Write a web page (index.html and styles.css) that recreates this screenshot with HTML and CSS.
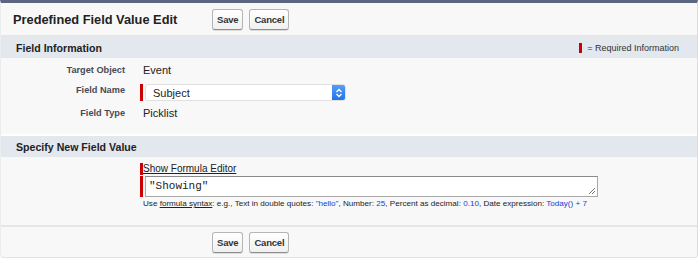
FILE: index.html
```html
<!DOCTYPE html>
<html>
	<head>
		<meta charset="utf-8">
		<title>Predefined Field Value Edit</title>
		<link rel="stylesheet" href="styles.css">
	</head>
	<body>
		<div class="edit-box">
			<div class="page-bar">
				<h2 class="page-title">Predefined Field Value Edit</h2>
				<div class="btn-row">
					<button class="btn">Save</button>
					<button class="btn">Cancel</button>
				</div>
			</div>

			<div class="section-head">
				<h3>Field Information</h3>
				<div class="req-legend"><span class="req-bar"></span>= Required Information</div>
			</div>
			<div class="section-body info-rows">
				<div class="row">
					<div class="label">Target Object</div>
					<div class="value">Event</div>
				</div>
				<div class="row select-row">
					<div class="label">Field Name</div>
					<div class="value required">
						<div class="fake-select">
							<span>Subject</span>
							<span class="select-arrow">
								<svg width="8" height="12" viewBox="0 0 8 12"><path d="M1.5 5 L4 2.5 L6.5 5 M1.5 7 L4 9.5 L6.5 7" fill="none" stroke="#fff" stroke-width="1.3"/></svg>
							</span>
						</div>
					</div>
				</div>
				<div class="row">
					<div class="label">Field Type</div>
					<div class="value">Picklist</div>
				</div>
			</div>

			<div class="section-head">
				<h3>Specify New Field Value</h3>
			</div>
			<div class="section-body formula">
				<div class="formula-col">
					<div class="required"><a href="#" class="formula-link">Show Formula Editor</a></div>
					<div class="required">
						<div class="fake-textarea">"Showing"<span class="grip"></span></div>
					</div>
					<div class="help">Use <u>formula syntax</u>: e.g., Text in double quotes: <span class="blue">"hello"</span>, Number: <span class="blue">25</span>, Percent as decimal: <span class="blue">0.10</span>, Date expression: <span class="blue">Today() + 7</span></div>
				</div>
			</div>

			<div class="page-bar bottom">
				<div class="btn-row">
					<button class="btn">Save</button>
					<button class="btn">Cancel</button>
				</div>
			</div>
		</div>
	</body>
</html>
```

FILE: styles.css
```css
* {
	margin: 0;
	padding: 0;
	box-sizing: border-box;
}
body {
	background: #fff;
	font-family: "Liberation Sans", Arial, sans-serif;
	color: #222;
}
.edit-box {
	width: 698px;
	background: #f8f8f8;
	border-top: 3px solid #5a6680;
	border-right: 1px solid #dcdcdc;
	border-bottom: 1px solid #e2e2e2;
	border-left: 1px solid #ececec;
	border-radius: 0 0 4px 4px;
}
.page-bar {
	display: flex;
	align-items: center;
	height: 34px;
	border-bottom: 2px solid #e6e6e6;
	padding-left: 12px;
	padding-top: 1px;
}
.page-title {
	width: 199px;
	font-size: 12.8px;
	font-weight: bold;
	color: #222;
}
.btn-row {
	display: flex;
	gap: 6px;
}
.btn {
	font-family: "Liberation Sans", Arial, sans-serif;
	font-size: 9.5px;
	font-weight: bold;
	letter-spacing: -0.2px;
	color: #333;
	background: linear-gradient(#fff, #f0f0f0);
	border: 1px solid #b5b5b5;
	border-bottom-color: #8e8e8e;
	border-radius: 3px;
	height: 21px;
	padding: 0 4px;
	box-shadow: 0 1px 0 #ddd;
}
.page-bar.bottom {
	border-bottom: none;
	border-top: 2px solid #e6e6e6;
	height: 32px;
	padding-top: 0;
	padding-left: 211px;
}
.section-head {
	display: flex;
	align-items: center;
	justify-content: space-between;
	height: 21px;
	background: #e3e7ee;
	padding: 0 18px 0 15px;
}
.section-head h3 {
	font-size: 10.6px;
	font-weight: bold;
	color: #222;
}
.req-legend {
	display: flex;
	align-items: center;
	font-size: 9px;
	color: #333;
}
.req-bar {
	display: inline-block;
	width: 3px;
	height: 10px;
	background: #c00;
	margin-right: 5px;
}
.info-rows {
	height: 78px;
	padding-top: 6px;
	border-bottom: 2px solid #fff;
}
.row {
	display: flex;
	align-items: flex-start;
	height: 14px;
	margin-bottom: 6px;
}
.row.select-row {
	height: 17px;
	margin-bottom: 6px;
}
.label {
	width: 124px;
	text-align: right;
	font-size: 9.2px;
	font-weight: bold;
	color: #4a4a56;
	padding-top: 1px;
}
.value {
	padding-left: 18px;
	font-size: 11px;
	color: #222;
}
.required {
	border-left: 3px solid #c00;
	padding-left: 2px;
}
.row .value.required {
	margin-left: 15px;
	padding-left: 2px;
}
.fake-select {
	display: flex;
	align-items: center;
	justify-content: space-between;
	width: 201px;
	height: 17px;
	background: #fff;
	border: 1px solid #e0e0e0;
	border-radius: 3px;
	font-size: 11px;
	padding-left: 7px;
	overflow: hidden;
}
.select-arrow {
	display: flex;
	align-items: center;
	justify-content: center;
	width: 13px;
	height: 17px;
	background: linear-gradient(#5aa0f8, #1f6fe8);
}
.formula {
	padding: 6px 0 0 139px;
	height: 68px;
}
.formula-col {
	width: 460px;
}
.formula-col .required {
	padding-left: 0;
}
.formula-link {
	font-size: 10px;
	color: #222;
	line-height: 12px;
	display: block;
}
.fake-textarea {
	position: relative;
	margin-left: 2px;
	width: 453px;
	height: 21px;
	background: #fff;
	border: 1px solid #a9a9a9;
	border-top-color: #8a8a8a;
	font-family: "Liberation Mono", "Courier New", monospace;
	font-size: 11px;
	padding: 3px 0 0 3px;
	margin-top: 1px;
}
.grip {
	position: absolute;
	right: 2px;
	bottom: 2px;
	width: 6px;
	height: 6px;
	background: linear-gradient(135deg, transparent 45%, #777 45%, #777 55%, transparent 55%, transparent 70%, #777 70%, #777 80%, transparent 80%);
}
.help {
	font-size: 8.1px;
	color: #222;
	padding: 2px 0 0 3px;
	white-space: nowrap;
}
.blue {
	color: #1a3bd9;
}
```
